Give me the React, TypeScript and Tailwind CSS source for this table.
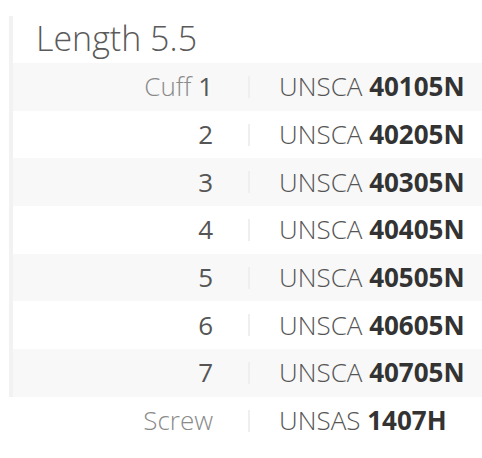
import React from "react";

const rows = [
  { label: "Cuff", num: "1", code: "40105N" },
  { label: "", num: "2", code: "40205N" },
  { label: "", num: "3", code: "40305N" },
  { label: "", num: "4", code: "40405N" },
  { label: "", num: "5", code: "40505N" },
  { label: "", num: "6", code: "40605N" },
  { label: "", num: "7", code: "40705N" },
];

export default function App() {
  return (
    <div
      className="w-[482px] h-[458px] bg-white pl-[9px] pt-[16px]"
      style={{ fontFamily: '"Open Sans", "Liberation Sans", sans-serif' }}
    >
      <div className="border-l-4 border-[#f2f2f2]">
        <div className="h-[47px] pl-[23px] text-[34px] leading-[44px] font-light text-[#5a5a5a]">
          Length 5.5
        </div>
        {rows.map((r, i) => (
          <div
            key={i}
            className={`flex items-center h-[47.7px] ${i % 2 === 0 ? "bg-[#f8f8f8]" : "bg-white"}`}
          >
            <div className="w-[200px] text-right text-[26px] font-light text-[#555]">
              {r.label && <span className="text-[#8a8a8a]">{r.label} </span>}
              <span className="font-normal">{r.num}</span>
            </div>
            <div className="w-[66px] pl-[35px] flex items-center">
              <div className="w-[2px] h-[22px] bg-[#efefef]" />
            </div>
            <div className="text-[26px] text-[#555]">
              <span className="font-light">UNSCA </span>
              <span className="font-bold text-[#333]">{r.code}</span>
            </div>
          </div>
        ))}
      </div>
      <div className="flex items-center h-[48px]">
        <div className="w-[204px] text-right text-[26px] font-light text-[#8a8a8a]">
          Screw
        </div>
        <div className="w-[66px] pl-[35px] flex items-center">
          <div className="w-[2px] h-[22px] bg-[#efefef]" />
        </div>
        <div className="text-[26px] text-[#555]">
          <span className="font-light">UNSAS </span>
          <span className="font-bold text-[#333]">1407H</span>
        </div>
      </div>
    </div>
  );
}
